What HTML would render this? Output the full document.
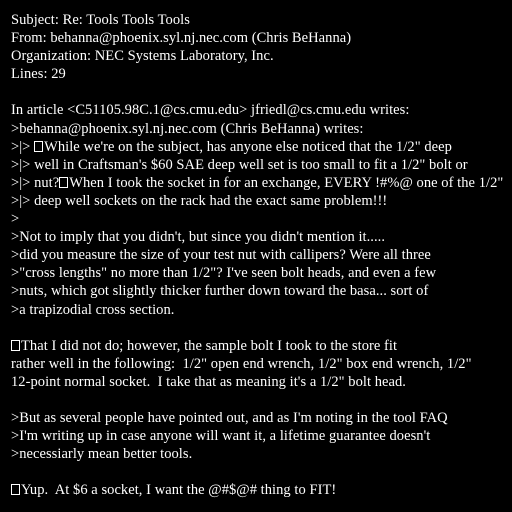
<!DOCTYPE html>
<html><head><style>
html,body{margin:0;padding:0;background:#000;width:512px;height:512px;overflow:hidden}
pre{margin:0;position:absolute;left:11px;top:11px;color:#fff;font-family:"Liberation Serif",serif;font-size:14.5px;line-height:18.1px;white-space:pre;letter-spacing:0.05px}
.b{display:inline-block;width:9px;height:11px;border:1px solid #fff;box-sizing:border-box;margin-right:1px;vertical-align:-1px}
</style></head><body><pre>Subject: Re: Tools Tools Tools
From: behanna@phoenix.syl.nj.nec.com (Chris BeHanna)
Organization: NEC Systems Laboratory, Inc.
Lines: 29

In article &lt;C51105.98C.1@cs.cmu.edu&gt; jfriedl@cs.cmu.edu writes:
&gt;behanna@phoenix.syl.nj.nec.com (Chris BeHanna) writes:
&gt;|&gt; <span class="b"></span>While we're on the subject, has anyone else noticed that the 1/2" deep
&gt;|&gt; well in Craftsman's $60 SAE deep well set is too small to fit a 1/2" bolt or
&gt;|&gt; nut?<span class="b"></span>When I took the socket in for an exchange, EVERY !#%@ one of the 1/2"
&gt;|&gt; deep well sockets on the rack had the exact same problem!!!
&gt;
&gt;Not to imply that you didn't, but since you didn't mention it.....
&gt;did you measure the size of your test nut with callipers? Were all three
&gt;"cross lengths" no more than 1/2"? I've seen bolt heads, and even a few
&gt;nuts, which got slightly thicker further down toward the basa... sort of
&gt;a trapizodial cross section.

<span class="b"></span>That I did not do; however, the sample bolt I took to the store fit
rather well in the following:  1/2" open end wrench, 1/2" box end wrench, 1/2"
12-point normal socket.  I take that as meaning it's a 1/2" bolt head.

&gt;But as several people have pointed out, and as I'm noting in the tool FAQ
&gt;I'm writing up in case anyone will want it, a lifetime guarantee doesn't
&gt;necessiarly mean better tools.

<span class="b"></span>Yup.  At $6 a socket, I want the @#$@# thing to FIT!
</pre></body></html>
